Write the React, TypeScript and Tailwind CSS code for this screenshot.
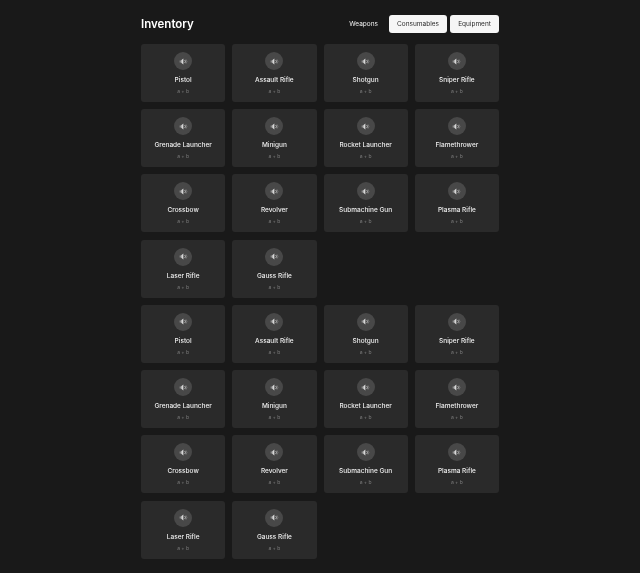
const names = [
  "Pistol",
  "Assault Rifle",
  "Shotgun",
  "Sniper Rifle",
  "Grenade Launcher",
  "Minigun",
  "Rocket Launcher",
  "Flamethrower",
  "Crossbow",
  "Revolver",
  "Submachine Gun",
  "Plasma Rifle",
  "Laser Rifle",
  "Gauss Rifle",
]

function SoundIcon() {
  return (
    <svg viewBox="0 0 12 12" className="h-[9px] w-[9px] text-[#d8d8d8]" fill="none">
      <rect x="1" y="4.6" width="1.2" height="2.8" fill="currentColor" opacity="0.7" />
      <path d="M3 4.4 L5.8 2 V10 L3 7.6 Z" fill="currentColor" />
      <path d="M7.6 4 a2.6 2.6 0 0 1 0 4" stroke="currentColor" strokeWidth="1" />
      <path d="M9.2 3 a4.2 4.2 0 0 1 0 6" stroke="currentColor" strokeWidth="0.7" opacity="0.5" />
    </svg>
  )
}

function ItemCard({ name }: { name: string }) {
  return (
    <div className="flex h-[58px] flex-col items-center rounded-[3px] bg-[#2a2a2a] pt-2">
      <div className="flex h-[18px] w-[18px] items-center justify-center rounded-full bg-[#484848]">
        <SoundIcon />
      </div>
      <p className="mt-1 text-[6.5px] leading-[12px] font-medium text-[#eeeeee]">{name}</p>
      <p className="text-[5px] leading-[11px] text-[#7c7c7c]">a + b</p>
    </div>
  )
}

export default function App() {
  return (
    <div className="min-h-[573px] bg-[#191919] font-['Inter',sans-serif] antialiased">
      <div className="mx-auto w-[358px] pt-[15px] transform-gpu">
        {/* Header */}
        <div className="flex h-[18px] items-center justify-between">
          <h1 className="pt-[2px] text-[11.5px] font-semibold text-white">Inventory</h1>
          <div className="flex items-center gap-[3px]">
            <button className="mr-[3px] pt-[2px] pr-[5px] pl-[7px] text-[6.5px] font-normal text-[#f2f2f2]">Weapons</button>
            <button className="h-[18px] w-[58px] rounded-[3px] bg-[#f6f6f6] pt-[2px] text-[6.5px] font-normal text-[#2a2a2a]">
              Consumables
            </button>
            <button className="h-[18px] w-[49px] rounded-[3px] bg-[#f6f6f6] pt-[2px] text-[6.5px] font-normal text-[#2a2a2a]">
              Equipment
            </button>
          </div>
        </div>

        <div className="mt-[11px] grid grid-cols-4 gap-x-[7px] gap-y-[7.22px]">
          {names.map((name) => (
            <ItemCard key={`a-${name}`} name={name} />
          ))}
          <div className="col-span-2" />
          {names.map((name) => (
            <ItemCard key={`b-${name}`} name={name} />
          ))}
        </div>
      </div>
    </div>
  )
}
